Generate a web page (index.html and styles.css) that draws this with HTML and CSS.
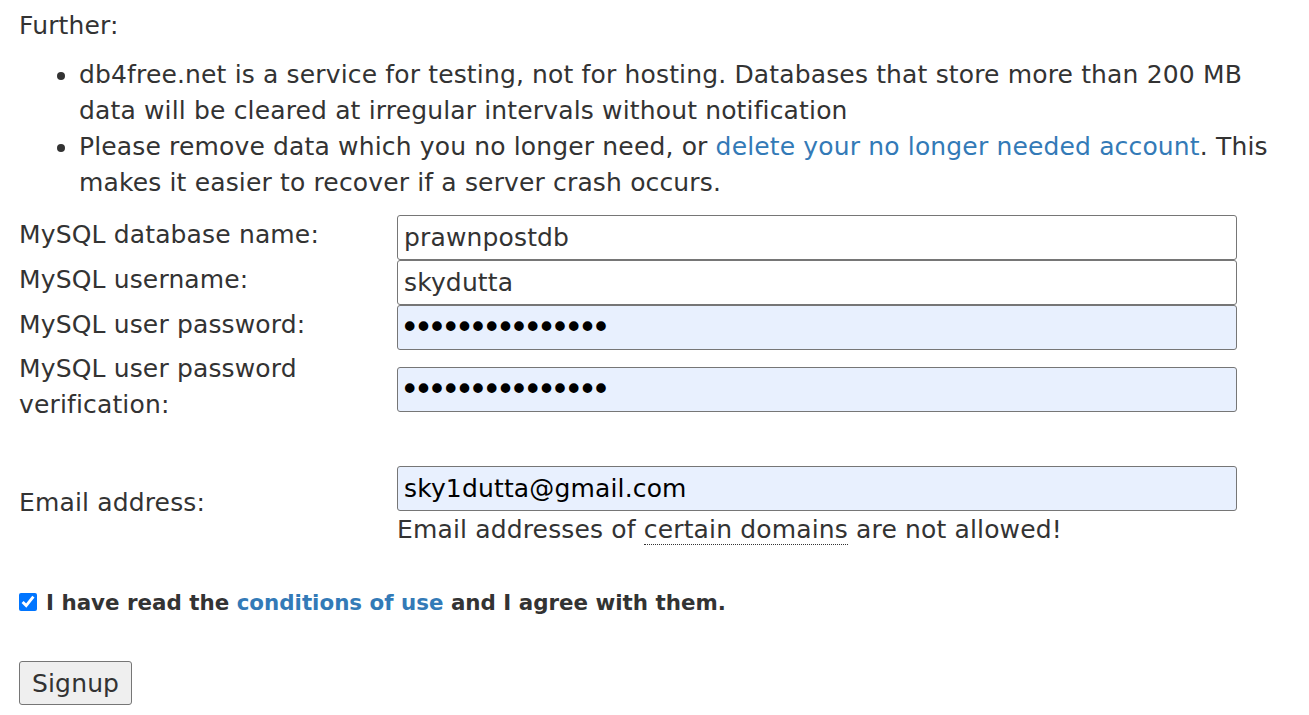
FILE: index.html
```html
<!DOCTYPE html>
<html>
<head>
<meta charset="utf-8">
<link rel="stylesheet" href="styles.css">
</head>
<body>
<div class="page">
  <p class="lead">Further:</p>
  <ul class="notes">
    <li>db4free.net is a service for testing, not for hosting. Databases that store more than 200 MB data will be cleared at irregular intervals without notification</li>
    <li>Please remove data which you no longer need, or <a href="#">delete your no longer needed account</a>. This makes it easier to recover if a server crash occurs.</li>
  </ul>
  <form class="signup">
    <div class="row">
      <label class="lbl">MySQL database name:</label>
      <input class="field" type="text" value="prawnpostdb">
    </div>
    <div class="row">
      <label class="lbl">MySQL username:</label>
      <input class="field" type="text" value="skydutta">
    </div>
    <div class="row">
      <label class="lbl">MySQL user password:</label>
      <input class="field filled pw" type="password" value="abcdefghijklmno">
    </div>
    <div class="row">
      <label class="lbl tall">MySQL user password<br>verification:</label>
      <input class="field filled pw" type="password" value="abcdefghijklmno">
    </div>
    <div class="spacer"></div>
    <div class="row email">
      <label class="lbl">Email address:</label>
      <div class="emailcell">
        <input class="field filled" type="text" value="sky1dutta@gmail.com">
        <div class="hint">Email addresses of <abbr class="dotted">certain domains</abbr> are not allowed!</div>
      </div>
    </div>
    <div class="agree">
      <input class="check" type="checkbox" checked>
      <span>I have read the <a href="#">conditions of use</a> and I agree with them.</span>
    </div>
    <button class="btn" type="button">Signup</button>
  </form>
</div>
</body>
</html>
```
FILE: styles.css
```css
html, body { margin: 0; padding: 0; background: #fff; }
body {
  font-family: "DejaVu Sans", Verdana, sans-serif;
  font-size: 25px;
  letter-spacing: 0.15px;
  line-height: 36px;
  color: #333;
}
.page { padding: 8px 19px 0 19px; }
a { color: #337ab7; text-decoration: none; }
.lead { margin: 0 0 13px 0; }
.notes { margin: 0 0 14px 0; padding-left: 60px; }
.signup { display: flex; flex-direction: column; align-items: flex-start; }
.row { display: grid; grid-template-columns: 378px 840px; align-items: center; }
.lbl { padding-bottom: 5px; }
.lbl.tall { padding: 1px 0 6px 0; }
.field {
  box-sizing: border-box;
  width: 840px;
  height: 45px;
  margin: 0;
  border: 1px solid #767676;
  border-radius: 3px;
  padding: 0 6px;
  font-family: inherit;
  font-size: 25px;
  letter-spacing: 0.15px;
  color: #333;
  background: #fff;
}
.field.filled { background: #e8f0fe; color: #000; }
.field.pw { font-size: 33px; letter-spacing: -5.8px; padding-left: 2px; }
.spacer { height: 37px; }
.row.email .lbl { padding-bottom: 8px; }
.emailcell { display: flex; flex-direction: column; }
.hint { line-height: 37px; }
.dotted { text-decoration: none; border-bottom: 1px dotted #333; }
.agree { display: flex; align-items: center; margin-top: 37px; font-weight: bold; font-size: 21.4px; letter-spacing: 0; }
.check { width: 18px; height: 18px; margin: -3px 9px 0 0; accent-color: #0075ff; }
.btn {
  margin-top: 40px;
  height: 44px;
  padding: 0 12px;
  font-family: inherit;
  font-size: 25px;
  letter-spacing: 0.15px;
  color: #333;
  background: #efefef;
  border: 1px solid #767676;
  border-radius: 3px;
}
```
